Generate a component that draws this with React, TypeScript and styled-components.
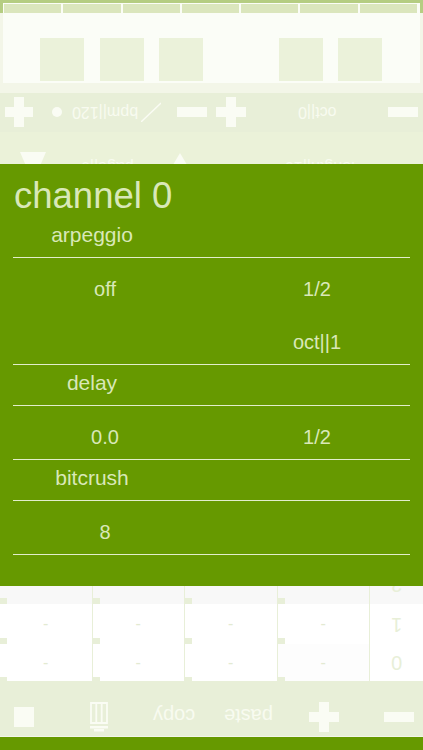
import styled, { createGlobalStyle } from 'styled-components';

const GlobalStyle = createGlobalStyle`
  html, body {
    margin: 0;
    padding: 0;
    background: #669900;
  }
  * {
    box-sizing: border-box;
  }
`;

const Page = styled.div`
  display: flex;
  flex-direction: column;
  width: 423px;
  height: 750px;
  overflow: hidden;
  font-family: 'Liberation Sans', Arial, sans-serif;
  background: #669900;
`;

const KeyboardArea = styled.div`
  flex-shrink: 0;
  height: 93px;
  padding: 3px 3px 0;
  background: linear-gradient(#b5cd82 0, #b5cd82 13px, #f3f6e8 13px);
`;

const Keyboard = styled.div`
  position: relative;
  display: flex;
  height: 80px;
  border: 1px solid #fbfdf7;
  border-bottom-width: 2px;
`;

const WhiteKey = styled.div`
  flex: 1;
  background: linear-gradient(#dbe6bd 0, #dbe6bd 9px, #fbfdf7 9px);
  border-right: 2px solid #fbfdf7;
  &:last-of-type {
    border-right: 0;
  }
`;

const BlackKey = styled.div<{ $left: number }>`
  position: absolute;
  top: 34px;
  left: ${(p) => p.$left}px;
  width: 44px;
  height: 43px;
  background: #ebf2da;
`;

const ControlRow = styled.div`
  display: flex;
  align-items: center;
  justify-content: space-between;
  flex-shrink: 0;
  height: 39px;
  padding: 0 5px 1px;
  background: #e8efd8;
`;

const Cluster = styled.div<{ $spread?: boolean }>`
  display: flex;
  align-items: center;
  width: 202px;
  justify-content: ${(p) => (p.$spread ? 'space-between' : 'flex-start')};
`;

// keeps the hand-measured distance between two toolbar items
const Slot = styled.div<{ $left?: number; $top?: number }>`
  display: flex;
  flex-shrink: 0;
  margin-left: ${(p) => p.$left ?? 0}px;
  margin-top: ${(p) => p.$top ?? 0}px;
`;

const PlusIcon = styled.div`
  width: 30px;
  height: 30px;
  background: linear-gradient(#fafcf4, #fafcf4) center / 30px 10px no-repeat,
    linear-gradient(#fafcf4, #fafcf4) center / 10px 30px no-repeat;
`;

const MinusIcon = styled.div`
  width: 30px;
  height: 10px;
  background: #fafcf4;
`;

const FlipText = styled.span<{ $size?: number; $color?: string }>`
  display: inline-block;
  transform: rotate(180deg);
  font-size: ${(p) => p.$size ?? 16}px;
  color: ${(p) => p.$color ?? '#f8fbf0'};
  white-space: nowrap;
`;

const Dot = styled.div`
  width: 10px;
  height: 10px;
  border-radius: 50%;
  background: #fafcf4;
`;

const PageRow = styled.div`
  display: flex;
  align-items: flex-start;
  flex-shrink: 0;
  height: 32px;
  padding-left: 20px;
  background: #ebf2d9;
  overflow: hidden;
`;

const Triangle = styled.div<{ $down?: boolean }>`
  width: 0;
  height: 0;
  border-left: 13px solid transparent;
  border-right: 13px solid transparent;
  ${(p) =>
    p.$down
      ? 'border-top: 30px solid #fafcf4;'
      : 'border-bottom: 22px solid #fafcf4;'}
`;

const Dialog = styled.div`
  flex-shrink: 0;
  height: 422px;
  padding: 12px 13px 0;
  background: #669900;
  color: #d9e8b8;
`;

const Title = styled.div`
  margin-bottom: 1px;
  padding-left: 1px;
  font-size: 36.5px;
  line-height: 40px;
`;

const SectionHead = styled.div`
  display: flex;
  align-items: center;
  height: 41px;
  padding-bottom: 4px;
  border-bottom: 1px solid #e2eecb;
`;

const SectionLabel = styled.div`
  width: 158px;
  text-align: center;
  font-size: 21px;
`;

const ValueRow = styled.div<{ $line?: boolean; $height: number }>`
  display: grid;
  grid-template-columns: 184px 184px;
  column-gap: 28px;
  align-items: center;
  height: ${(p) => p.$height}px;
  padding-top: 10px;
  text-align: center;
  font-size: 20px;
  ${(p) => (p.$line ? 'border-bottom: 1px solid #e2eecb;' : '')}
`;

const Grid = styled.div`
  display: flex;
  flex-shrink: 0;
  height: 95px;
  background: #ffffff;
`;

const GridColumn = styled.div`
  position: relative;
  display: flex;
  flex-direction: column;
  width: 92.5px;
  overflow: hidden;
  border-right: 1px solid #e8efd8;
  &:last-child {
    flex: 1;
    border-right: 0;
  }
`;

const HeadCell = styled.div`
  display: flex;
  justify-content: center;
  align-items: flex-start;
  height: 18px;
  background: #f8f8f8;
`;

const Cell = styled.div<{ $shade?: string; $height: number }>`
  display: flex;
  align-items: center;
  justify-content: center;
  height: ${(p) => p.$height}px;
  color: #e3ead2;
  font-size: 16px;
  background: ${(p) => p.$shade ?? 'transparent'};
`;

const Tick = styled.div<{ $top: number }>`
  position: absolute;
  left: 0;
  top: ${(p) => p.$top}px;
  width: 7px;
  height: 6px;
  background: #e8efd8;
`;

const Toolbar = styled.div`
  display: flex;
  align-items: center;
  flex-shrink: 0;
  height: 56px;
  padding: 16px 0 0 14px;
  background: #e8efd8;
  border-bottom: 1px solid #f3f6e8;
`;

const StopIcon = styled.div`
  width: 20px;
  height: 20px;
  background: #fafcf4;
`;

const columns = [0, 1, 2, 3];

export default function App() {
  return (
    <Page>
      <GlobalStyle />
      <KeyboardArea>
        <Keyboard>
          {[0, 1, 2, 3, 4, 5, 6].map((k) => (
            <WhiteKey key={k} />
          ))}
          {[36, 96, 155, 275, 334].map((left) => (
            <BlackKey key={left} $left={left} />
          ))}
        </Keyboard>
      </KeyboardArea>
      <ControlRow>
        <Cluster>
          <PlusIcon />
          <Slot $left={19}>
            <Dot />
          </Slot>
          <Slot $left={10}>
            <FlipText>bpm||120</FlipText>
          </Slot>
          <Slot $left={3}>
            <svg width="20" height="20" viewBox="0 0 20 20">
              <line x1="0" y1="20" x2="20" y2="1" stroke="#fafcf4" strokeWidth="1.4" />
            </svg>
          </Slot>
          <Slot $left={16}>
            <MinusIcon />
          </Slot>
        </Cluster>
        <Cluster $spread>
          <PlusIcon />
          <FlipText>oct||0</FlipText>
          <MinusIcon />
        </Cluster>
      </ControlRow>
      <PageRow>
        <Slot $top={20}>
          <Triangle $down />
        </Slot>
        <Slot $left={35} $top={26}>
          <FlipText>page||0</FlipText>
        </Slot>
        <Slot $left={33} $top={21}>
          <Triangle />
        </Slot>
        <Slot $left={92} $top={26}>
          <FlipText>length||16</FlipText>
        </Slot>
      </PageRow>
      <Dialog>
        <Title>channel 0</Title>
        <SectionHead>
          <SectionLabel>arpeggio</SectionLabel>
        </SectionHead>
        <ValueRow $height={53}>
          <div>off</div>
          <div>1/2</div>
        </ValueRow>
        <ValueRow $line $height={54}>
          <div />
          <div>oct||1</div>
        </ValueRow>
        <SectionHead>
          <SectionLabel>delay</SectionLabel>
        </SectionHead>
        <ValueRow $line $height={54}>
          <div>0.0</div>
          <div>1/2</div>
        </ValueRow>
        <SectionHead>
          <SectionLabel>bitcrush</SectionLabel>
        </SectionHead>
        <ValueRow $line $height={54}>
          <div>8</div>
          <div />
        </ValueRow>
      </Dialog>
      <Grid>
        {columns.map((c) => (
          <GridColumn key={c}>
            <HeadCell />
            <Cell $height={40}>-</Cell>
            <Cell $height={37} $shade={c === 3 ? '#fdfdfd' : undefined}>
              -
            </Cell>
            <Tick $top={12} />
            <Tick $top={52} />
            <Tick $top={91} />
          </GridColumn>
        ))}
        <GridColumn>
          <HeadCell>
            <Slot $top={-13}>
              <FlipText $size={20} $color="#e8efd8">
                2
              </FlipText>
            </Slot>
          </HeadCell>
          <Cell $height={40}>
            <FlipText $size={20} $color="#e8efd8">
              1
            </FlipText>
          </Cell>
          <Cell $height={37}>
            <FlipText $size={20} $color="#e8efd8">
              0
            </FlipText>
          </Cell>
        </GridColumn>
      </Grid>
      <Toolbar>
        <StopIcon />
        <Slot $left={56}>
          <svg width="18" height="30" viewBox="0 0 18 30">
            <path
              d="M1 1h16v20H1zM6.3 1v20M11.7 1v20"
              fill="none"
              stroke="#fafcf4"
              strokeWidth="1.8"
            />
            <path d="M0 24h18v2.5H0zM4 27h10v2.5H4z" fill="#fafcf4" />
          </svg>
        </Slot>
        <Slot $left={45} $top={-3}>
          <FlipText $size={20}>copy</FlipText>
        </Slot>
        <Slot $left={29} $top={-3}>
          <FlipText $size={20}>paste</FlipText>
        </Slot>
        <Slot $left={36}>
          <PlusIcon />
        </Slot>
        <Slot $left={45}>
          <MinusIcon />
        </Slot>
      </Toolbar>
    </Page>
  );
}
